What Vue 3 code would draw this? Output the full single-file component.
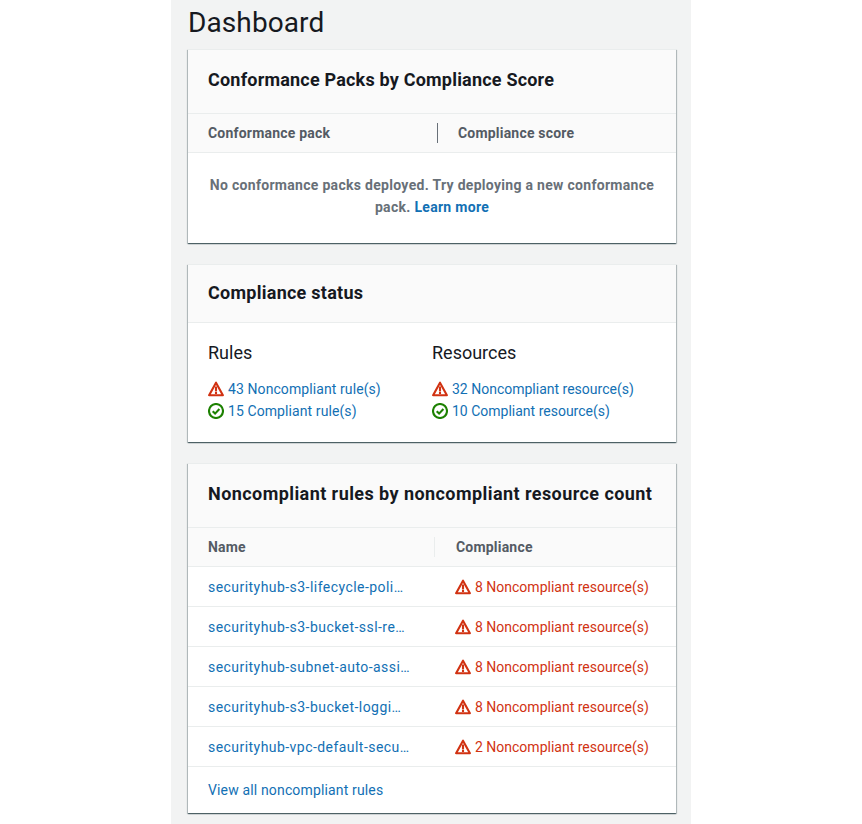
<script setup>
const rows = [
  ['securityhub-s3-lifecycle-poli…', 8],
  ['securityhub-s3-bucket-ssl-re…', 8],
  ['securityhub-subnet-auto-assi…', 8],
  ['securityhub-s3-bucket-loggi…', 8],
  ['securityhub-vpc-default-secu…', 2],
]
</script>

<template>
  <div class="page">
    <main class="panel">
      <h1 class="title">Dashboard</h1>

      <section class="card first">
        <header class="card-head"><h2>Conformance Packs by Compliance Score</h2></header>
        <div class="thead packs">
          <div class="th">Conformance pack</div>
          <div class="th divided">Compliance score</div>
        </div>
        <p class="empty">No conformance packs deployed. Try deploying a new conformance pack. <a>Learn more</a></p>
      </section>

      <section class="card second">
        <header class="card-head short"><h2>Compliance status</h2></header>
        <div class="status">
          <div class="status-col wide">
            <h3>Rules</h3>
            <div class="stat"><svg class="icon" viewBox="0 0 16 16"><path class="warn" d="M8 1.7 1.1 14.2h13.8z"/><path class="warn" d="M8 5.6v4.8M8 11v1.9"/></svg><a>43 Noncompliant rule(s)</a></div>
            <div class="stat"><svg class="icon" viewBox="0 0 16 16"><circle class="ok" cx="8" cy="8" r="7"/><path class="ok" d="m4.7 8.2 2.4 2.4 4.3-4.6"/></svg><a>15 Compliant rule(s)</a></div>
          </div>
          <div class="status-col">
            <h3>Resources</h3>
            <div class="stat"><svg class="icon" viewBox="0 0 16 16"><path class="warn" d="M8 1.7 1.1 14.2h13.8z"/><path class="warn" d="M8 5.6v4.8M8 11v1.9"/></svg><a>32 Noncompliant resource(s)</a></div>
            <div class="stat"><svg class="icon" viewBox="0 0 16 16"><circle class="ok" cx="8" cy="8" r="7"/><path class="ok" d="m4.7 8.2 2.4 2.4 4.3-4.6"/></svg><a>10 Compliant resource(s)</a></div>
          </div>
        </div>
      </section>

      <section class="card third">
        <header class="card-head"><h2>Noncompliant rules by noncompliant resource count</h2></header>
        <div class="thead rules">
          <div class="th">Name</div>
          <div class="th faint">Compliance</div>
        </div>
        <div v-for="row in rows" :key="row[0]" class="row">
          <a class="rule">{{ row[0] }}</a>
          <div class="bad"><svg class="icon" viewBox="0 0 16 16"><path class="warn" d="M8 1.7 1.1 14.2h13.8z"/><path class="warn" d="M8 5.6v4.8M8 11v1.9"/></svg>{{ row[1] }} Noncompliant resource(s)</div>
        </div>
        <footer class="foot"><a>View all noncompliant rules</a></footer>
      </section>
    </main>
  </div>
</template>

<style scoped>
.page {
  width: 862px;
  height: 824px;
  overflow: hidden;
  background: #fff;
  font-family: Roboto, "Noto Sans", sans-serif;
  color: #16191f;
  font-size: 14px;
}
.panel {
  box-sizing: border-box;
  width: 520px;
  height: 824px;
  margin-left: 171px;
  padding: 0 15px 0 17px;
  background: #f2f3f3;
}
.title {
  margin: 0;
  height: 49px;
  font-size: 28px;
  font-weight: 400;
  line-height: 46px;
  letter-spacing: .1px;
}
.card {
  background: #fff;
  box-shadow: 0 1px 1px 0 rgba(0, 28, 36, .5), 1px 1px 1px 0 rgba(0, 28, 36, .2), -1px 1px 1px 0 rgba(0, 28, 36, .2);
  border-top: 1px solid #eaeded;
  box-sizing: border-box;
}
.first { height: 194px; margin-bottom: 21px; }
.second { height: 178px; margin-bottom: 21px; }
.third { height: 350px; }
.card-head {
  box-sizing: border-box;
  height: 64px;
  padding: 0 20px 4px;
  display: flex;
  align-items: center;
  background: #fafafa;
  border-bottom: 1px solid #eaeded;
}
.card-head.short { height: 58px; padding-bottom: 2px; }
.card-head h2 {
  margin: 0;
  font-size: 18px;
  font-weight: 700;
  line-height: 24px;
  letter-spacing: .2px;
}
.second .card-head h2 { letter-spacing: .26px; }
.third .card-head h2 { letter-spacing: .43px; }
.thead {
  box-sizing: border-box;
  height: 39px;
  display: grid;
  align-items: center;
  background: #fafafa;
  border-bottom: 1px solid #eaeded;
}
.packs { grid-template-columns: 249px 1fr; }
.rules { grid-template-columns: 246px 1fr; }
.th {
  padding-left: 20px;
  font-size: 14px;
  font-weight: 700;
  color: #545b64;
  line-height: 20px;
  letter-spacing: .2px;
}
.divided { border-left: 1px solid #687078; }
.faint { border-left: 1px solid #eaeded; padding-left: 21px; }
.empty {
  margin: 0;
  padding: 21px 20px 0;
  text-align: center;
  font-size: 14px;
  font-weight: 700;
  line-height: 22px;
  color: #687078;
  letter-spacing: .3px;
}
a { color: #1270b4; }
.status {
  display: grid;
  grid-template-columns: 224px 1fr;
  padding: 18px 20px 0;
}
.wide .stat { letter-spacing: .09px; }
h3 {
  margin: 0 0 13px;
  font-size: 18px;
  font-weight: 400;
  line-height: 24px;
}
.stat {
  display: flex;
  align-items: center;
  gap: 4px;
  height: 22px;
  font-size: 14px;
}
.icon {
  flex: none;
  width: 16px;
  height: 16px;
}
.icon path, .icon circle {
  fill: none;
  stroke-width: 2.1;
}
.warn { stroke: #d13212; stroke-linejoin: round; }
.ok { stroke: #1d8102; }
.row {
  box-sizing: border-box;
  height: 40px;
  display: grid;
  grid-template-columns: 247px 1fr;
  align-items: center;
  border-bottom: 1px solid #eaeded;
  padding-left: 20px;
}
.rule { font-size: 14px; white-space: nowrap; letter-spacing: .45px; }
.bad {
  display: flex;
  align-items: center;
  gap: 4px;
  color: #d13212;
  font-size: 14px;
}
.foot {
  padding: 13px 20px 0;
  line-height: 20px;
  letter-spacing: .15px;
}
</style>
